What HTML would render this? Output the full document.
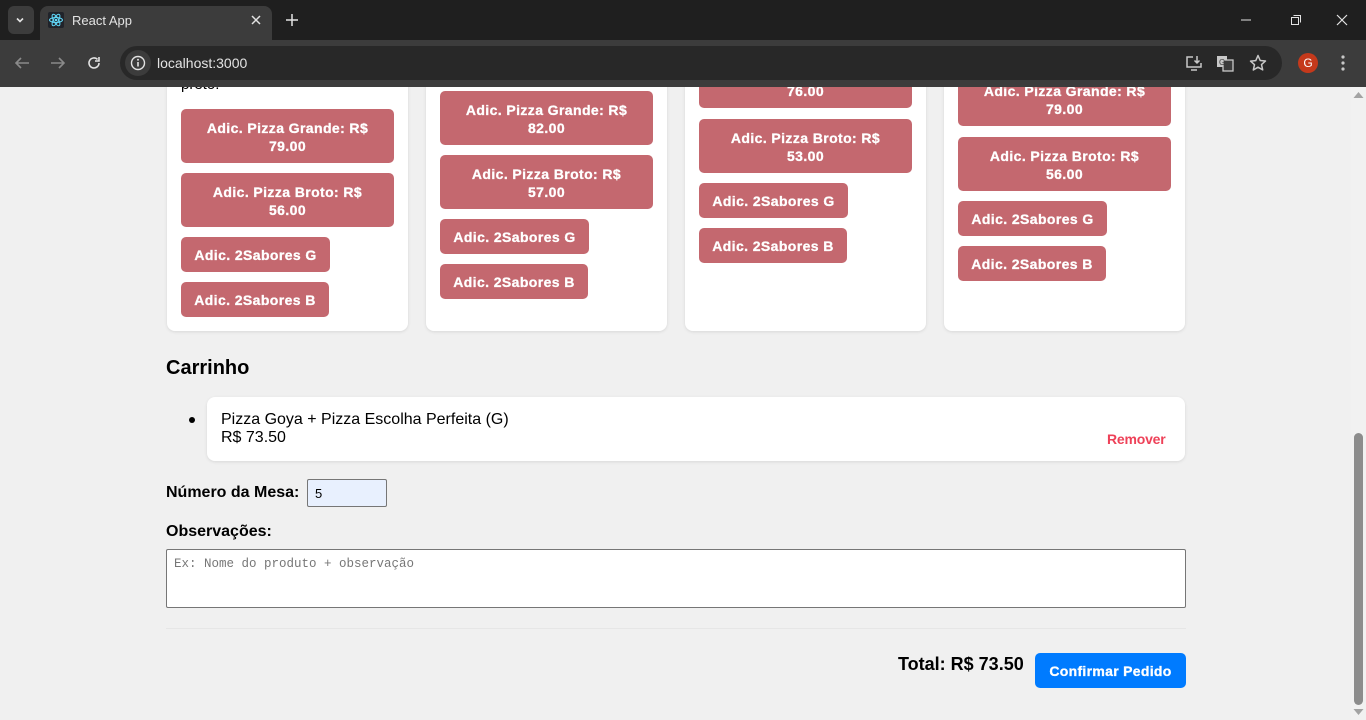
<!DOCTYPE html>
<html><head><meta charset="utf-8"><style>
*{box-sizing:border-box;margin:0;padding:0}
body{width:1366px;height:720px;overflow:hidden;background:#f0f0f0;font-family:"Liberation Sans",Arial,sans-serif;position:relative}
.a{position:absolute}
.top{left:0;top:0;width:1366px;height:40px;background:#1f1f1f}
.tab{left:40px;top:6px;width:232px;height:34px;background:#3c3c3c;border-radius:8px 8px 0 0}
.tool{left:0;top:40px;width:1366px;height:47px;background:#3c3c3c}
.url{left:120px;top:46px;width:1162px;height:34px;background:#282828;border-radius:17px}
.ct{color:#e3e3e3;font-size:13px}
.card{background:#fff;border-radius:8px;box-shadow:0 1px 3px rgba(0,0,0,.1);width:241px}
.b{position:absolute;background:#c4686f;color:#fff;font-weight:bold;font-size:14px;letter-spacing:.4px;border-radius:5px;text-align:center;line-height:18px;-webkit-text-stroke:.3px #fff}
.b2{width:213px;height:54px;padding-top:10px}
.b1{height:35px;line-height:36px;width:149px}
</style></head><body>
<div class="a top"></div>
<div class="a" style="left:8px;top:6px;width:26px;height:28px;background:#3c3c3c;border-radius:6px"></div>
<svg class="a" style="left:14px;top:14px" width="12" height="12"><path d="M3 4.5l3 3 3-3" stroke="#e3e3e3" stroke-width="1.6" fill="none"/></svg>
<div class="a tab"></div>
<svg class="a" style="left:48px;top:12px" width="16" height="16"><rect width="16" height="16" rx="2" fill="#20232a"/><g fill="none" stroke="#61dafb" stroke-width="1"><ellipse cx="8" cy="8" rx="6.5" ry="2.5"/><ellipse cx="8" cy="8" rx="6.5" ry="2.5" transform="rotate(60 8 8)"/><ellipse cx="8" cy="8" rx="6.5" ry="2.5" transform="rotate(-60 8 8)"/></g><circle cx="8" cy="8" r="1.3" fill="#61dafb"/></svg>
<div class="a ct" style="left:72px;top:13px">React App</div>
<svg class="a" style="left:250px;top:14px" width="12" height="12"><path d="M2 2l8 8M10 2l-8 8" stroke="#e3e3e3" stroke-width="1.5"/></svg>
<svg class="a" style="left:285px;top:13px" width="14" height="14"><path d="M7 1v12M1 7h12" stroke="#e3e3e3" stroke-width="1.5"/></svg>
<svg class="a" style="left:1240px;top:14px" width="12" height="12"><path d="M1 6h10" stroke="#e3e3e3" stroke-width="1"/></svg>
<svg class="a" style="left:1290px;top:14px" width="12" height="12"><rect x="1.5" y="3.5" width="7" height="7" stroke="#e3e3e3" fill="none"/><path d="M3.5 1.5h7v7" stroke="#e3e3e3" fill="none"/></svg>
<svg class="a" style="left:1336px;top:14px" width="12" height="12"><path d="M1 1l10 10M11 1L1 11" stroke="#e3e3e3" stroke-width="1.2"/></svg>
<div class="a tool"></div>
<svg class="a" style="left:14px;top:56px" width="16" height="14"><path d="M15 7H2M7 2L2 7l5 5" stroke="#8a8a8a" stroke-width="1.6" fill="none"/></svg>
<svg class="a" style="left:50px;top:56px" width="16" height="14"><path d="M1 7h13M9 2l5 5-5 5" stroke="#8a8a8a" stroke-width="1.6" fill="none"/></svg>
<svg class="a" style="left:86px;top:55px" width="16" height="16"><path d="M13 8a5 5 0 1 1-1.5-3.6M13 2v4h-4" stroke="#e3e3e3" stroke-width="1.6" fill="none"/></svg>
<div class="a url"></div>
<div class="a" style="left:125px;top:50px;width:26px;height:26px;border-radius:13px;background:#3c3c3c"></div>
<svg class="a" style="left:130px;top:55px" width="16" height="16"><circle cx="8" cy="8" r="6.5" stroke="#e3e3e3" stroke-width="1.4" fill="none"/><path d="M8 7v4.5" stroke="#e3e3e3" stroke-width="1.6"/><circle cx="8" cy="4.8" r="1" fill="#e3e3e3"/></svg>
<div class="a" style="left:157px;top:55px;color:#e3e3e3;font-size:14px">localhost:3000</div>
<svg class="a" style="left:1185px;top:54px" width="18" height="18"><path d="M8 3H2v10h14V9" stroke="#c8c8c8" stroke-width="1.5" fill="none"/><path d="M12 2v7M9.5 6.5L12 9l2.5-2.5M6 16h6" stroke="#c8c8c8" stroke-width="1.5" fill="none"/></svg>
<svg class="a" style="left:1216px;top:54px" width="18" height="18"><rect x="1" y="2" width="10" height="11" fill="#c8c8c8"/><rect x="7" y="6" width="10" height="11" fill="#3c3c3c" stroke="#c8c8c8" stroke-width="1.3"/><text x="3" y="11" font-size="8" fill="#3c3c3c" font-family="Liberation Sans">G</text></svg>
<svg class="a" style="left:1249px;top:54px" width="18" height="18"><path d="M9 1.5l2.2 5 5.3.5-4 3.6 1.2 5.3L9 13.2 4.3 16l1.2-5.3-4-3.6 5.3-.5z" stroke="#c8c8c8" stroke-width="1.5" fill="none" stroke-linejoin="round"/></svg>
<div class="a" style="left:1298px;top:53px;width:20px;height:20px;border-radius:10px;background:#c5391b;color:#fff;font-size:12px;text-align:center;line-height:20px">G</div>
<svg class="a" style="left:1340px;top:54px" width="6" height="18"><circle cx="3" cy="3" r="1.6" fill="#c8c8c8"/><circle cx="3" cy="9" r="1.6" fill="#c8c8c8"/><circle cx="3" cy="15" r="1.6" fill="#c8c8c8"/></svg>

<div class="a" style="left:0;top:87px;width:1351px;height:633px;overflow:hidden">
<div class="a card" style="left:167px;top:-40px;height:284px"></div>
<div class="a card" style="left:426px;top:-40px;height:284px"></div>
<div class="a card" style="left:685px;top:-40px;height:284px"></div>
<div class="a card" style="left:944px;top:-40px;height:284px"></div>
<div class="a" style="left:181px;top:-11px;font-size:15px;color:#000">preto.</div>
<div class="b b2" style="left:181px;top:22px">Adic. Pizza Grande: R$<br>79.00</div>
<div class="b b2" style="left:181px;top:86px">Adic. Pizza Broto: R$<br>56.00</div>
<div class="b b1" style="left:181px;top:150px">Adic. 2Sabores G</div>
<div class="b b1" style="left:181px;top:195px;width:148px">Adic. 2Sabores B</div>
<div class="b b2" style="left:440px;top:4px">Adic. Pizza Grande: R$<br>82.00</div>
<div class="b b2" style="left:440px;top:68px">Adic. Pizza Broto: R$<br>57.00</div>
<div class="b b1" style="left:440px;top:132px">Adic. 2Sabores G</div>
<div class="b b1" style="left:440px;top:177px;width:148px">Adic. 2Sabores B</div>
<div class="b b2" style="left:699px;top:-33px">Adic. Pizza Grande: R$<br>76.00</div>
<div class="b b2" style="left:699px;top:32px">Adic. Pizza Broto: R$<br>53.00</div>
<div class="b b1" style="left:699px;top:96px">Adic. 2Sabores G</div>
<div class="b b1" style="left:699px;top:141px;width:148px">Adic. 2Sabores B</div>
<div class="b b2" style="left:958px;top:-15px">Adic. Pizza Grande: R$<br>79.00</div>
<div class="b b2" style="left:958px;top:50px">Adic. Pizza Broto: R$<br>56.00</div>
<div class="b b1" style="left:958px;top:114px">Adic. 2Sabores G</div>
<div class="b b1" style="left:958px;top:159px;width:148px">Adic. 2Sabores B</div>

<div class="a" style="left:166px;top:270px;font-size:20px;font-weight:bold;color:#000">Carrinho</div>
<div class="a" style="left:189px;top:330px;width:6px;height:6px;border-radius:3px;background:#000"></div>
<div class="a" style="left:207px;top:310px;width:978px;height:64px;background:#fff;border-radius:8px;box-shadow:0 1px 3px rgba(0,0,0,.1)"></div>
<div class="a" style="left:221px;top:324px;font-size:16px;line-height:18px;color:#000">Pizza Goya + Pizza Escolha Perfeita (G)<br>R$ 73.50</div>
<div class="a" style="left:1107px;top:344px;font-size:14px;font-weight:bold;color:#ee4158;letter-spacing:-.2px">Remover</div>
<div class="a" style="left:166px;top:397px;font-size:16px;font-weight:bold;color:#000">Número da Mesa:</div>
<div class="a" style="left:307px;top:392px;width:80px;height:28px;background:#e8f0fe;border:1px solid #767676;border-radius:2px;font-size:13px;padding:6px 0 0 7px">5</div>
<div class="a" style="left:166px;top:436px;font-size:16px;font-weight:bold;color:#000">Observações:</div>
<div class="a" style="left:166px;top:462px;width:1020px;height:59px;background:#fff;border:1px solid #767676;border-radius:2px;font-family:'Liberation Mono',monospace;font-size:12.5px;color:#777;padding:7px 0 0 7px">Ex: Nome do produto + observação</div>
<div class="a" style="left:166px;top:541px;width:1020px;height:1px;background:#e6e6e6"></div>
<div class="a" style="left:898px;top:567px;font-size:18px;font-weight:bold;color:#000">Total: R$ 73.50</div>
<div class="a" style="left:1035px;top:566px;width:151px;height:35px;background:#007bff;border-radius:5px;color:#fff;font-size:14px;font-weight:bold;letter-spacing:.3px;text-align:center;line-height:36px;-webkit-text-stroke:.3px #fff">Confirmar Pedido</div>
</div>

<div class="a" style="left:1351px;top:87px;width:15px;height:633px;background:#f1f1f1"></div>
<svg class="a" style="left:1353px;top:90px" width="11" height="9"><path d="M0.5 8l5-6 5 6z" fill="#a3a3a3"/></svg>
<div class="a" style="left:1354px;top:433px;width:9px;height:272px;border-radius:5px;background:#8c8c8c"></div>
<svg class="a" style="left:1353px;top:708px" width="11" height="9"><path d="M0.5 1l5 6 5-6z" fill="#a3a3a3"/></svg>
</body></html>
